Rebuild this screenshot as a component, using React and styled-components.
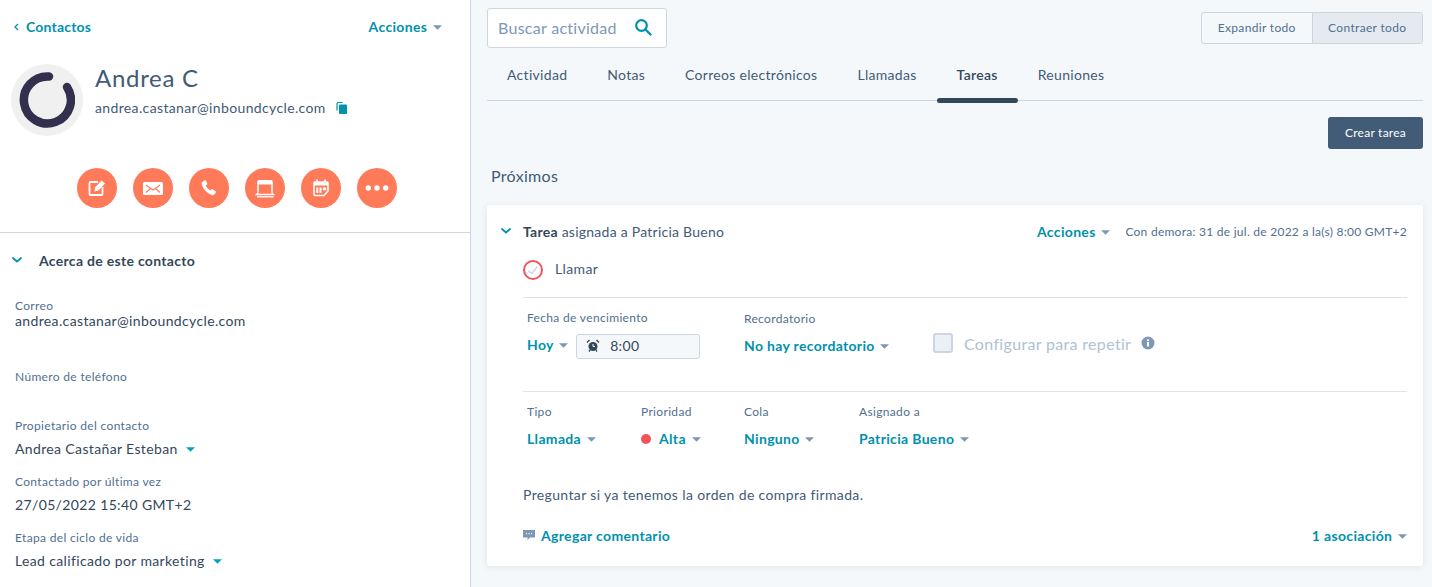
import React from 'react'
import styled, { createGlobalStyle } from 'styled-components'

const GlobalStyle = createGlobalStyle`
html, body {
  margin: 0;
  padding: 0;
  height: 100%;
  overflow: hidden;
  background: #f5f8fa;
}
body {
  font-family: Lato, "Noto Sans", sans-serif;
  font-size: 14px;
  letter-spacing: 0.36px;
  color: #33475b;
}
* { box-sizing: border-box; }
`

function Caret({ color = '#7c98b6' }) {
  return (
    <CaretIcon viewBox="0 0 10 5">
      <path d="M0 0h10L5 5z" fill={color} />
    </CaretIcon>
  )
}

function Chevron() {
  return (
    <svg width="10" height="6" viewBox="0 0 10 6">
      <path d="M1 1l4 3.6L9 1" fill="none" stroke="#0091ae" strokeWidth="1.8" strokeLinecap="round" />
    </svg>
  )
}

const actionIcons = [
  // note
  <svg key="note" width="20" height="20" viewBox="0 0 20 20" fill="none">
    <path d="M11 4H3.500A1 1 0 0 0 2.500 5v11a1 1 0 0 0 1 1h11a1 1 0 0 0 1-1V9" stroke="#fff" strokeWidth="1.800" />
    <path d="M8 9.500L14.500 2.500 18 5.500l-6.500 7-4 1z" fill="#fff" />
  </svg>,
  // email
  <svg key="mail" width="22" height="20" viewBox="0 0 22 20" fill="none">
    <rect x="1" y="4" width="20" height="13" rx="1.500" fill="#fff" />
    <path d="M4 7l7 5 7-5M4 14.500l4.500-4M18 14.500l-4.500-4" stroke="#ff7a59" strokeWidth="1.100" />
  </svg>,
  // call
  <svg key="call" width="20" height="20" viewBox="0 0 20 20">
    <path d="M5.500 2.500L3.300 4c-.8.600-.9 1.700-.5 2.800 1.800 5 5 8.400 10 10.300 1 .4 2 .2 2.600-.6l1.400-2c.3-.5.200-1-.2-1.300l-2.800-1.900c-.4-.3-.9-.2-1.200.1l-1.100 1.200c-2.100-1.100-3.800-2.900-4.800-5l1.300-1c.4-.3.500-.8.300-1.200L7 2.800c-.4-.5-1-.6-1.500-.3z" fill="#fff" />
  </svg>,
  // meeting screen
  <svg key="screen" width="22" height="20" viewBox="0 0 22 20" fill="none">
    <path d="M4 5v9.500M18 5v9.500" stroke="#fff" strokeWidth="1.500" />
    <path d="M3.300 6.500V3.500A1.500 1.500 0 0 1 4.800 2h12.400a1.500 1.500 0 0 1 1.500 1.500v3z" fill="#fff" />
    <path d="M4 14.500c0 1.200-1 1.500-1.500 2h17c-.5-.5-1.500-.8-1.500-2" stroke="#fff" strokeWidth="1.400" />
    <path d="M3 18.800h16.500" stroke="#fff" strokeWidth="1.300" />
  </svg>,
  // calendar task
  <svg key="cal" width="20" height="20" viewBox="0 0 20 20" fill="none">
    <path d="M3 5a1 1 0 0 1 1-1h12a1 1 0 0 1 1 1v8l-4 4.500H4a1 1 0 0 1-1-1z" stroke="#fff" strokeWidth="1.600" />
    <path d="M6 1.500v3M14 1.500v3" stroke="#fff" strokeWidth="1.800" />
    <rect x="3" y="4.500" width="14" height="3" fill="#fff" />
    <path d="M6.300 9.500v5.500M9.500 9.500v5.500" stroke="#fff" strokeWidth="2" />
    <rect x="11.800" y="9.500" width="3.500" height="2.800" fill="#fff" />
  </svg>,
  // more
  <svg key="more" width="24" height="6" viewBox="0 0 24 6">
    <circle cx="3.300" cy="3" r="2.700" fill="#fff" />
    <circle cx="12" cy="3" r="2.700" fill="#fff" />
    <circle cx="20.700" cy="3" r="2.700" fill="#fff" />
  </svg>,
]

const tabs = ['Actividad', 'Notas', 'Correos electrónicos', 'Llamadas', 'Tareas', 'Reuniones']

const taskFields = [
  { label: 'Tipo', value: 'Llamada', width: 114 },
  { label: 'Prioridad', value: 'Alta', width: 103, dot: true },
  { label: 'Cola', value: 'Ninguno', width: 115 },
  { label: 'Asignado a', value: 'Patricia Bueno', width: 140 },
]

export default function App() {
  return (
    <>
      <GlobalStyle />
      <Page>
        <Sidebar>
          <TopRow>
            <BackLink>
              <svg width="5" height="8" viewBox="0 0 5 8">
                <path d="M4 1L1 4l3 3" fill="none" stroke="#0091ae" strokeWidth="1.300" />
              </svg>
              Contactos
            </BackLink>
            <Dropdown>Acciones <Caret /></Dropdown>
          </TopRow>
          <Profile>
            <Avatar>
              <svg width="56" height="56" viewBox="0 0 56 56">
                <path
                  d="M30 4.500A23.500 23.500 0 1 0 48 15"
                  fill="none"
                  stroke="#33304f"
                  strokeWidth="8.500"
                  strokeLinecap="round"
                />
              </svg>
            </Avatar>
            <div>
              <Name>Andrea C</Name>
              <EmailRow>
                andrea.castanar@inboundcycle.com
                <svg width="11" height="12" viewBox="0 0 11 12">
                  <path d="M1 8.500V2a1.500 1.500 0 0 1 1.500-1.500h4" fill="none" stroke="#0091ae" strokeWidth="1.200" />
                  <rect x="3" y="2.500" width="8" height="9.500" rx="1" fill="#0091ae" />
                </svg>
              </EmailRow>
            </div>
          </Profile>
          <ActionRow>
            {actionIcons.map((icon) => (
              <ActionButton key={icon.key}>{icon}</ActionButton>
            ))}
          </ActionRow>
          <SectionHeader>
            <Chevron />
            Acerca de este contacto
          </SectionHeader>
          <Props>
            <Prop $height={71}>
              <PropLabel>Correo</PropLabel>
              <PropValue>andrea.castanar@inboundcycle.com</PropValue>
            </Prop>
            <Prop $height={49}>
              <PropLabel>Número de teléfono</PropLabel>
            </Prop>
            <Prop $height={56} $gap={8}>
              <PropLabel>Propietario del contacto</PropLabel>
              <PropValue>Andrea Castañar Esteban <Caret color="#00a4bd" /></PropValue>
            </Prop>
            <Prop $height={56} $gap={8}>
              <PropLabel>Contactado por última vez</PropLabel>
              <PropValue>27/05/2022 15:40 GMT+2</PropValue>
            </Prop>
            <Prop $height={56} $gap={8}>
              <PropLabel>Etapa del ciclo de vida</PropLabel>
              <PropValue>Lead calificado por marketing <Caret color="#00a4bd" /></PropValue>
            </Prop>
          </Props>
        </Sidebar>

        <Main>
          <Toolbar>
            <SearchBox>
              <SearchText>Buscar actividad</SearchText>
              <svg width="18" height="18" viewBox="0 0 18 18" fill="none">
                <circle cx="7.500" cy="7.500" r="5.300" stroke="#0091ae" strokeWidth="2.200" />
                <path d="M11.500 11.500l5 5" stroke="#0091ae" strokeWidth="2.400" strokeLinecap="round" />
              </svg>
            </SearchBox>
            <Segmented>
              <Segment>Expandir todo</Segment>
              <Segment $active>Contraer todo</Segment>
            </Segmented>
          </Toolbar>

          <TabBar>
            {tabs.map((t) => (
              <Tab key={t} $active={t === 'Tareas'}>{t}</Tab>
            ))}
          </TabBar>

          <ButtonRow>
            <PrimaryButton>Crear tarea</PrimaryButton>
          </ButtonRow>

          <Heading>Próximos</Heading>

          <Card>
            <CardHead>
              <Chevron />
              <CardTitle><b>Tarea</b> asignada a Patricia Bueno</CardTitle>
              <Dropdown>Acciones <Caret /></Dropdown>
              <DueText>Con demora: 31 de jul. de 2022 a la(s) 8:00 GMT+2</DueText>
            </CardHead>

            <TaskName>
              <CheckCircle>
                <svg width="12" height="10" viewBox="0 0 12 10">
                  <path d="M1.500 5.500L4.500 8.500 10.500 1.500" fill="none" stroke="#cbd6e2" strokeWidth="1.300" />
                </svg>
              </CheckCircle>
              <TaskText>Llamar</TaskText>
            </TaskName>

            <Divider />

            <FieldRow $height={93}>
              <Field $width={217}>
                <FieldLabel>Fecha de vencimiento</FieldLabel>
                <DateControls>
                  <DaySelect>Hoy <Caret /></DaySelect>
                  <TimeInput>
                    <svg width="14" height="14" viewBox="0 0 14 14">
                      <circle cx="7" cy="7.500" r="4.500" fill="#33475b" />
                      <path d="M1 3.500L3.500 1M13 3.500L10.500 1M3 12.500l1-1.500M11 12.500l-1-1.500" stroke="#33475b" strokeWidth="1.400" />
                      <path d="M7 5v2.500h2" stroke="#fff" strokeWidth="1" fill="none" />
                    </svg>
                    8:00
                  </TimeInput>
                </DateControls>
              </Field>
              <Field $width={189} $shift={1}>
                <FieldLabel>Recordatorio</FieldLabel>
                <FieldValue><Dropdown>No hay recordatorio <Caret /></Dropdown></FieldValue>
              </Field>
              <RepeatOption>
                <Checkbox />
                Configurar para repetir
                <svg width="14" height="14" viewBox="0 0 14 14">
                  <circle cx="7" cy="7" r="6.500" fill="#7c98b6" />
                  <rect x="6" y="6" width="2" height="4.500" fill="#fff" />
                  <rect x="6" y="3.300" width="2" height="1.800" fill="#fff" />
                </svg>
              </RepeatOption>
            </FieldRow>

            <Divider />

            <FieldRow $height={75}>
              {taskFields.map((f) => (
                <Field key={f.label} $width={f.width}>
                  <FieldLabel>{f.label}</FieldLabel>
                  <FieldValue>
                    <Dropdown>
                      {f.dot && <PriorityDot />}
                      {f.value} <Caret />
                    </Dropdown>
                  </FieldValue>
                </Field>
              ))}
            </FieldRow>

            <Description>Preguntar si ya tenemos la orden de compra firmada.</Description>

            <CardFoot>
              <CommentLink>
                <svg width="12" height="12" viewBox="0 0 12 12">
                  <path d="M0 1h12v7.500H7L4.500 11V8.500H0z" fill="#7c98b6" />
                  <path d="M3 4.700h1M5.500 4.700h1M8 4.700h1" stroke="#fff" strokeWidth="1.200" />
                </svg>
                <Dropdown>Agregar comentario</Dropdown>
              </CommentLink>
              <Dropdown>1 asociación <Caret /></Dropdown>
            </CardFoot>
          </Card>
        </Main>
      </Page>
    </>
  )
}

const Page = styled.div`
display: flex;
width: 1432px;
height: 587px;
overflow: hidden;
`

const Sidebar = styled.aside`
width: 471px;
flex-shrink: 0;
background: #fff;
border-right: 1px solid #cbd6e2;
`

const TopRow = styled.div`
display: flex;
justify-content: space-between;
align-items: center;
height: 53px;
padding: 0 28px 0 14px;
`

const BackLink = styled.a`
display: flex;
align-items: center;
gap: 7px;
font-weight: 700;
letter-spacing: 0.2px;
color: #0091ae;
`

const CaretIcon = styled.svg`
display: inline-block;
width: 9px;
height: 5px;
margin-left: 2px;
vertical-align: 2px;
`

const Dropdown = styled.span`
font-weight: 700;
letter-spacing: 0.33px;
color: #0091ae;
white-space: nowrap;
`

const DaySelect = styled(Dropdown)`
padding-top: 1px;
`

const Profile = styled.div`
display: flex;
gap: 12px;
padding: 11px 0 0 11px;
height: 115px;
`

const Avatar = styled.div`
display: flex;
align-items: center;
justify-content: center;
width: 72px;
height: 72px;
border-radius: 50%;
background: #f0f0f0;
`

const Name = styled.div`
font-size: 24px;
font-weight: 400;
letter-spacing: 0.7px;
line-height: 30px;
margin-top: -1px;
color: #425b76;
`

const EmailRow = styled.div`
display: flex;
align-items: center;
gap: 10px;
margin-top: 5px;
line-height: 20px;
color: #425b76;
`

const ActionRow = styled.div`
display: flex;
gap: 16px;
padding-left: 77px;
height: 65px;
border-bottom: 1px solid #cbd6e2;
`

const ActionButton = styled.div`
display: flex;
align-items: center;
justify-content: center;
width: 40px;
height: 40px;
border-radius: 50%;
background: #ff7a59;
`

const SectionHeader = styled.div`
display: flex;
align-items: center;
gap: 17px;
height: 54px;
padding-left: 12px;
font-weight: 700;
letter-spacing: 0.3px;
`

const Props = styled.div`
padding: 12px 15px 0;
`

const Prop = styled.div`
display: flex;
flex-direction: column;
gap: ${(p) => p.$gap || 0}px;
height: ${(p) => p.$height}px;
`

const PropLabel = styled.div`
font-size: 12px;
line-height: 14px;
letter-spacing: 0.33px;
color: #516f90;
`

const PropValue = styled.div`
line-height: 16px;
color: #33475b;
svg {
  margin-left: 4px;
}
`

const Main = styled.main`
flex: 1;
min-width: 0;
padding: 8px 9px 0 16px;
background: #f5f8fa;
`

const Toolbar = styled.div`
display: flex;
justify-content: space-between;
align-items: flex-start;
`

const SearchBox = styled.div`
display: flex;
align-items: center;
justify-content: space-between;
width: 180px;
height: 40px;
padding: 0 14px 2px 10px;
background: #fff;
border: 1px solid #cbd6e2;
border-radius: 3px;
`

const SearchText = styled.span`
font-size: 16px;
letter-spacing: 0.28px;
color: #7c98b6;
`

const Segmented = styled.div`
display: flex;
width: 222px;
margin-top: 4px;
height: 32px;
border: 1px solid #cbd6e2;
border-radius: 3px;
overflow: hidden;
`

const Segment = styled.div`
display: flex;
align-items: center;
justify-content: center;
flex: 1;
padding-bottom: 2px;
font-size: 12px;
letter-spacing: 0.33px;
color: #516f90;
background: ${(p) => (p.$active ? '#e5eaf1' : 'transparent')};
& + & {
  border-left: 1px solid #cbd6e2;
}
`

const TabBar = styled.div`
display: flex;
height: 53px;
border-bottom: 1px solid #cbd6e2;
`

const Tab = styled.div`
position: relative;
display: flex;
align-items: center;
padding: 0 20px;
height: 52px;
letter-spacing: 0.3px;
color: ${(p) => (p.$active ? '#33475b' : '#425b76')};
font-weight: ${(p) => (p.$active ? 600 : 400)};
&::after {
  content: '';
  display: ${(p) => (p.$active ? 'block' : 'none')};
  position: absolute;
  left: 0;
  right: 0;
  bottom: -3px;
  height: 5px;
  border-radius: 3px;
  background: #33475b;
}
`

const ButtonRow = styled.div`
display: flex;
justify-content: flex-end;
padding-top: 16px;
`

const PrimaryButton = styled.div`
display: flex;
align-items: center;
justify-content: center;
width: 95px;
height: 32px;
padding-bottom: 2px;
font-size: 12px;
letter-spacing: 0.25px;
color: #fff;
background: #425b76;
border-radius: 3px;
`

const Heading = styled.h2`
margin: 17px 0 19px 4px;
font-size: 16px;
font-weight: 400;
line-height: 20px;
letter-spacing: 0.33px;
color: #425b76;
`

const Card = styled.section`
height: 361px;
padding: 0 16px 0 14px;
background: #fff;
border-radius: 3px;
box-shadow: 0 1px 6px rgba(66, 91, 118, 0.12);
`

const CardHead = styled.div`
display: flex;
align-items: center;
height: 54px;
padding-bottom: 2px;
font-size: 14px;
`

const CardTitle = styled.div`
flex: 1;
margin-left: 12px;
letter-spacing: 0.25px;
color: #425b76;
b {
  color: #33475b;
}
`

const DueText = styled.div`
margin-left: 15px;
font-size: 12px;
letter-spacing: 0.26px;
color: #516f90;
`

const TaskName = styled.div`
display: flex;
align-items: center;
gap: 12px;
height: 21px;
margin: 0 0 17px 22px;
color: #425b76;
`

const TaskText = styled.span`
margin-bottom: 3px;
`

const CheckCircle = styled.div`
display: flex;
align-items: center;
justify-content: center;
width: 20px;
height: 20px;
border: 2px solid #f2545b;
border-radius: 50%;
`

const Divider = styled.hr`
height: 1px;
margin: 0 0 0 22px;
border: 0;
background: #dfe3eb;
`

const FieldRow = styled.div`
display: flex;
padding: 12px 0 0 26px;
height: ${(p) => p.$height}px;
`

const Field = styled.div`
flex-shrink: 0;
width: ${(p) => p.$width}px;
padding-top: ${(p) => p.$shift || 0}px;
`

const FieldLabel = styled.div`
font-size: 12px;
line-height: 16px;
letter-spacing: 0.33px;
color: #516f90;
`

const FieldValue = styled.div`
margin-top: 9px;
line-height: 20px;
`

const DateControls = styled.div`
display: flex;
align-items: flex-start;
gap: 8px;
margin-top: 8px;
line-height: 20px;
`

const TimeInput = styled.div`
display: flex;
align-items: center;
gap: 10px;
width: 124px;
height: 25px;
padding: 0 0 1px 9px;
background: #f5f8fa;
border: 1px solid #cbd6e2;
border-radius: 3px;
color: #33475b;
`

const RepeatOption = styled.div`
display: flex;
align-items: center;
gap: 11px;
height: 20px;
margin-top: 23px;
font-size: 16px;
letter-spacing: 0.33px;
color: #b0c1d4;
svg {
  margin-left: -1px;
}
`

const Checkbox = styled.div`
width: 20px;
height: 20px;
background: #eaf0f6;
border: 2px solid #cbd6e2;
border-radius: 3px;
`

const PriorityDot = styled.i`
display: inline-block;
width: 10px;
height: 10px;
margin-right: 8px;
border-radius: 50%;
background: #f2545b;
`

const Description = styled.p`
margin: 18px 0 0 22px;
line-height: 20px;
color: #425b76;
`

const CardFoot = styled.div`
display: flex;
justify-content: space-between;
align-items: center;
margin: 20px 0 0 22px;
height: 20px;
`

const CommentLink = styled.div`
display: flex;
align-items: center;
gap: 6px;
`
